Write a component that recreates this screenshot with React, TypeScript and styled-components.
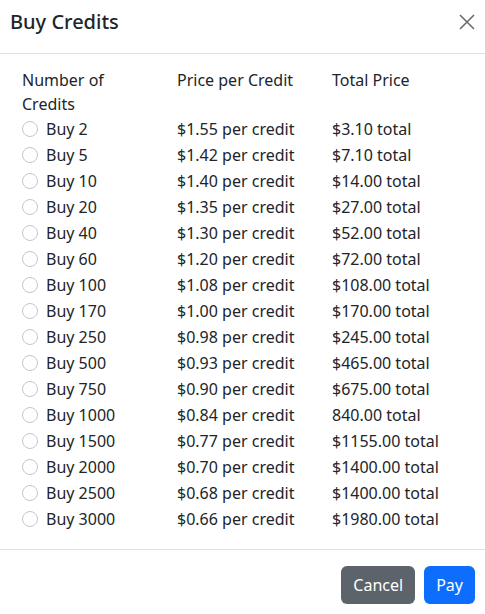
import { createGlobalStyle, styled } from "styled-components";

const GlobalStyle = createGlobalStyle`
  html, body {
    margin: 0;
    padding: 0;
    background: #ffffff;
  }
  body {
    font-family: "Noto Sans", "DejaVu Sans", sans-serif;
    color: #212529;
    font-size: 16px;
  }
  * {
    box-sizing: border-box;
  }
`;

const offers = [
  { qty: 2, per: "$1.55", total: "$3.10" },
  { qty: 5, per: "$1.42", total: "$7.10" },
  { qty: 10, per: "$1.40", total: "$14.00" },
  { qty: 20, per: "$1.35", total: "$27.00" },
  { qty: 40, per: "$1.30", total: "$52.00" },
  { qty: 60, per: "$1.20", total: "$72.00" },
  { qty: 100, per: "$1.08", total: "$108.00" },
  { qty: 170, per: "$1.00", total: "$170.00" },
  { qty: 250, per: "$0.98", total: "$245.00" },
  { qty: 500, per: "$0.93", total: "$465.00" },
  { qty: 750, per: "$0.90", total: "$675.00" },
  { qty: 1000, per: "$0.84", total: "840.00" },
  { qty: 1500, per: "$0.77", total: "$1155.00" },
  { qty: 2000, per: "$0.70", total: "$1400.00" },
  { qty: 2500, per: "$0.68", total: "$1400.00" },
  { qty: 3000, per: "$0.66", total: "$1980.00" },
];

const App = () => {
  return (
    <>
      <GlobalStyle />
      <Modal>
        <Header>
          <Title>Buy Credits</Title>
          <CloseButton aria-label="Close">
            <svg width="16" height="16" viewBox="0 0 16 16">
              <path
                d="M1 1 L15 15 M15 1 L1 15"
                stroke="#6c6c6c"
                strokeWidth="1.6"
                fill="none"
              />
            </svg>
          </CloseButton>
        </Header>
        <Body>
          <Table>
            <thead>
              <tr>
                <Th>
                  Number of
                  <br />
                  Credits
                </Th>
                <Th>Price per Credit</Th>
                <Th>Total Price</Th>
              </tr>
            </thead>
            <tbody>
              {offers.map((item) => (
                <tr key={item.qty}>
                  <Td>
                    <Label>
                      <Radio type="radio" name="credits" value={item.qty} />
                      Buy {item.qty}
                    </Label>
                  </Td>
                  <Td>{item.per} per credit</Td>
                  <Td>{item.total} total</Td>
                </tr>
              ))}
            </tbody>
          </Table>
        </Body>
        <Footer>
          <Button $variant="secondary">Cancel</Button>
          <Button $variant="primary">Pay</Button>
        </Footer>
      </Modal>
    </>
  );
};

export default App;

const Modal = styled.div`
  width: 485px;
  height: 614px;
  display: flex;
  flex-direction: column;
  background: #ffffff;
`;

const Header = styled.div`
  display: flex;
  align-items: center;
  justify-content: space-between;
  padding: 7px 10px 16px 10px;
  border-bottom: 1px solid #dee2e6;
`;

const Title = styled.h5`
  margin: 0;
  font-size: 20px;
  line-height: 30px;
  font-weight: 500;
`;

const CloseButton = styled.button`
  display: flex;
  align-items: center;
  justify-content: center;
  width: 24px;
  height: 24px;
  padding: 0;
  margin-right: -4px;
  border: none;
  background: transparent;
  cursor: pointer;
`;

const Body = styled.div`
  padding: 14px 10px 17px 10px;
  border-bottom: 1px solid #dee2e6;
`;

const Table = styled.table`
  width: 100%;
  border-collapse: collapse;
  table-layout: fixed;
`;

const Th = styled.th`
  text-align: left;
  font-weight: 400;
  vertical-align: top;
  padding: 0 12px;
  line-height: 24px;
`;

const Td = styled.td`
  padding: 1px 12px;
  line-height: 24px;
  white-space: nowrap;
`;

const Label = styled.label`
  display: flex;
  align-items: center;
  gap: 8px;
  cursor: pointer;
`;

const Radio = styled.input`
  appearance: none;
  width: 16px;
  height: 16px;
  margin: 0;
  border: 1px solid #c4c8cc;
  border-radius: 50%;
  background: #ffffff;
  flex-shrink: 0;
`;

const Footer = styled.div`
  display: flex;
  justify-content: flex-end;
  gap: 9px;
  padding: 16px 10px 10px 10px;
`;

const Button = styled.button<{ $variant: "primary" | "secondary" }>`
  font-family: inherit;
  font-size: 16px;
  line-height: 24px;
  padding: 6px 11px;
  border: 1px solid transparent;
  border-radius: 6px;
  color: #ffffff;
  cursor: pointer;
  background-color: ${(p) => (p.$variant === "primary" ? "#0d6efd" : "#5c636a")};
`;
